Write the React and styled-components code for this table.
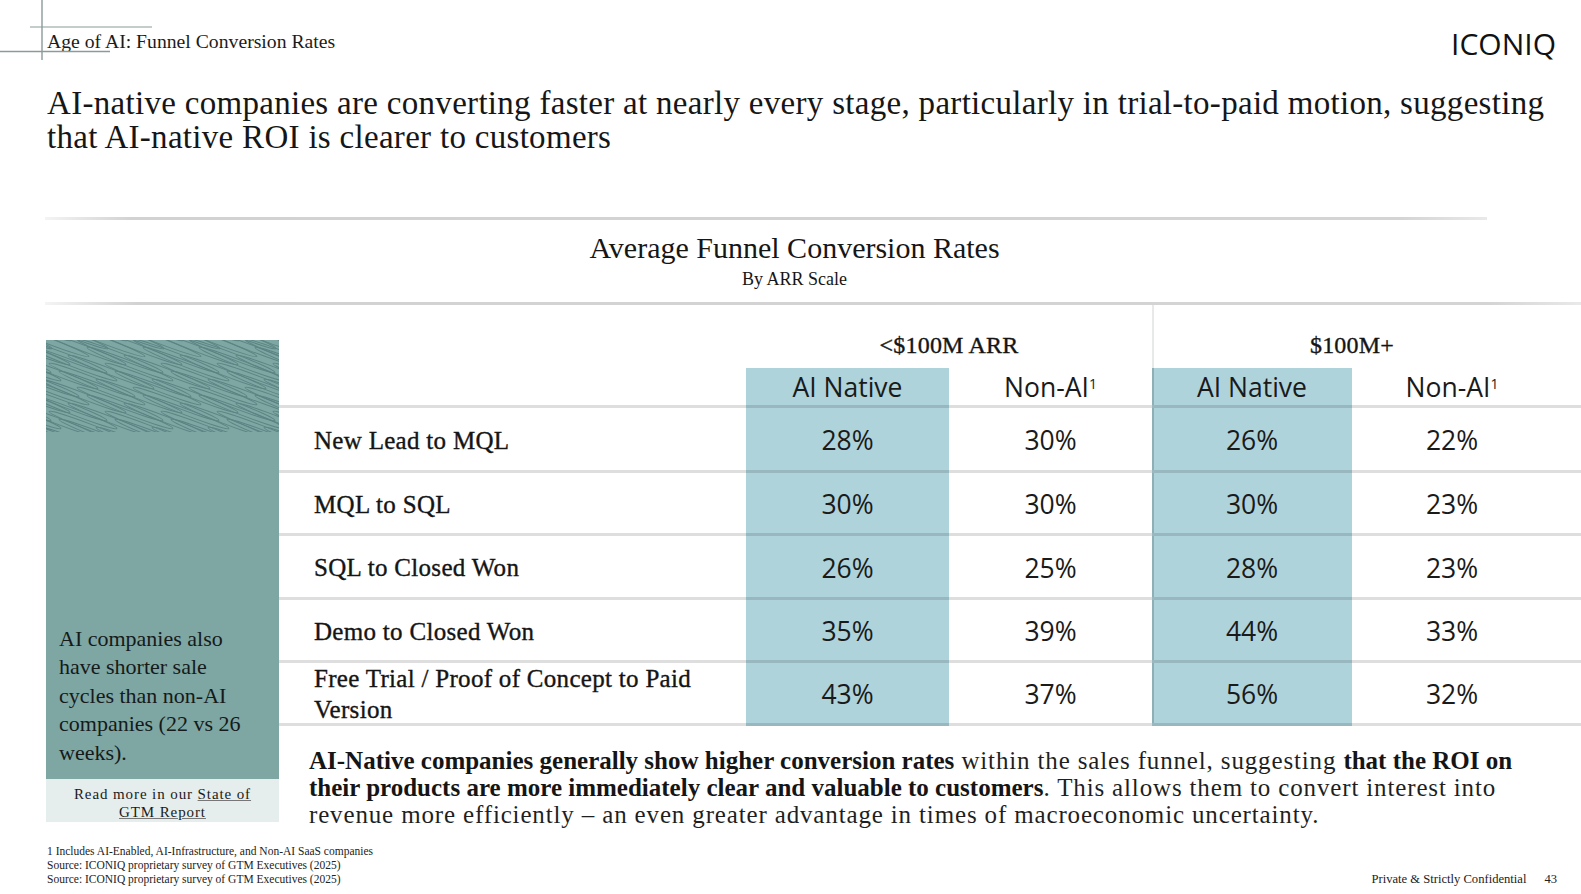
import React from 'react';
import styled, { createGlobalStyle } from 'styled-components';

const GlobalStyle = createGlobalStyle`
  html, body { margin: 0; padding: 0; background: #fff; }
  body { font-family: "Liberation Serif", "DejaVu Serif", serif; color: #151515; }
`;

const Slide = styled.div`
  position: relative;
  width: 1581px;
  height: 894px;
  overflow: hidden;
  background: #fff;
`;

const CornerMark = styled.svg`
  position: absolute;
  left: 0;
  top: 0;
`;

const TopBar = styled.header`
  display: flex;
  justify-content: space-between;
  align-items: flex-start;
  height: 58px;
  padding: 29px 25px 0 47px;
  box-sizing: border-box;
`;

const SectionLabel = styled.div`
  font-size: 19.7px;
  line-height: 24px;
  color: #1c1c1c;
`;

const Logo = styled.div`
  font-family: "Open Sans", sans-serif;
  font-size: 30px;
  line-height: 32px;
  color: #111;
  margin-top: -1px;
`;

const Headline = styled.h1`
  margin: 28px 0 0 47px;
  font-weight: 400;
  font-size: 33px;
  line-height: 34px;
  letter-spacing: 0.3px;
  white-space: nowrap;
  color: #161616;
`;

const ChartBlock = styled.section`
  margin-top: 63px;
`;

const Rule = styled.div`
  height: 3px;
  margin-left: 45px;
  width: ${p => p.$width}px;
  background: linear-gradient(90deg, rgba(200,200,200,0.2), #d2d2d2 6%, #d4d4d4 94%, rgba(200,200,200,0.4));
`;

const ChartHead = styled.div`
  text-align: center;
  padding: 11px 0 12px;
  margin-left: 8px;
`;

const ChartTitle = styled.div`
  font-size: 30px;
  line-height: 33px;
  color: #161616;
`;

const ChartSub = styled.div`
  margin-top: 4px;
  font-size: 18px;
  line-height: 22px;
  color: #161616;
`;

const Body = styled.div`
  display: flex;
  height: 530px;
  padding-left: 46px;
`;

const SidePanel = styled.aside`
  width: 233px;
  margin-top: 35px;
  display: flex;
  flex-direction: column;
`;

const SideCard = styled.div`
  height: 439px;
  background: #7ea6a3;
  display: flex;
  flex-direction: column;
  justify-content: space-between;
`;

const SideText = styled.p`
  margin: 0;
  padding: 0 15px 12px 13px;
  font-size: 22px;
  line-height: 28.4px;
  color: #151a1a;
`;

const SideLink = styled.div`
  height: 43px;
  background: #e5eeed;
  text-align: center;
  font-size: 15px;
  line-height: 18px;
  letter-spacing: 0.9px;
  color: #1a1a1a;
  padding-top: 6px;
  box-sizing: border-box;

  span {
    text-decoration: underline;
    text-decoration-color: #777;
  }
`;

const Main = styled.main`
  flex: 1;
  display: flex;
  flex-direction: column;
`;

const Table = styled.div`
  display: grid;
  grid-template-columns: 467px 203px 203px 200px 200px 1fr;
  grid-template-rows: 63px 40px 65px 63px 64px 63px 63px;
`;

const GroupHead = styled.div`
  grid-column: span 2;
  display: flex;
  align-items: flex-end;
  justify-content: center;
  padding-bottom: 10px;
  box-sizing: border-box;
  font-size: 24px;
  line-height: 26px;
  letter-spacing: 0.2px;
  -webkit-text-stroke: 0.35px #151515;
  color: #151515;
  box-shadow: ${p => (p.$divider ? 'inset 2px 0 0 rgba(150,160,160,0.22)' : 'none')};
`;

const Cell = styled.div`
  display: flex;
  align-items: center;
  justify-content: center;
  font-family: "Open Sans", sans-serif;
  font-size: 26.5px;
  color: #1a1a1a;
  background: ${p => (p.$blue ? '#afd3db' : 'transparent')};
  border-bottom: 3px solid rgba(0, 0, 0, 0.13);
  box-shadow: ${p => (p.$divider ? 'inset 2px 0 0 rgba(80,110,115,0.35)' : 'none')};
  box-sizing: border-box;
  padding-top: ${p => (p.$lift ? 0 : 2)}px;

  sup {
    font-size: 14px;
    position: relative;
    top: -3px;
  }
`;

const Label = styled.div`
  display: flex;
  align-items: center;
  padding: 2px 30px 0 35px;
  font-size: 25px;
  line-height: 31px;
  letter-spacing: 0.3px;
  color: #151515;
  -webkit-text-stroke: 0.35px #151515;
  border-bottom: 3px solid rgba(0, 0, 0, 0.13);
  box-sizing: border-box;
`;

const Summary = styled.p`
  margin: 21px 0 0 30px;
  font-size: 25px;
  line-height: 27px;
  letter-spacing: 0.85px;
  white-space: nowrap;
  color: #1f1f1f;

  strong {
    font-weight: 700;
    letter-spacing: 0;
    color: #151515;
  }
`;

const Footer = styled.footer`
  display: flex;
  justify-content: space-between;
  align-items: flex-end;
  margin-top: 9px;
  padding: 0 24px 0 47px;
`;

const Notes = styled.div`
  font-size: 11.5px;
  line-height: 14px;
  color: #222;
`;

const Confidential = styled.div`
  display: flex;
  gap: 18px;
  font-size: 12.6px;
  line-height: 14px;
  color: #222;
`;

const HatchTexture = () => {
  const strokes = [];
  for (let r = -8; r < 16; r++) {
    for (let c = -1; c < 5; c++) {
      const x = c * 56 + (r % 2) * 28 + (r % 3) * 9;
      const y = r * 8;
      strokes.push(
        <ellipse key={`${r}-${c}`} cx={x} cy={y} rx="46" ry="3" transform={`rotate(21 ${x} ${y})`} />
      );
    }
  }
  return (
    <svg width="233" height="92" viewBox="0 0 233 92">
      <g fill="none" stroke="#5b8482" strokeWidth="0.9">{strokes}</g>
    </svg>
  );
};

const rows = [
  ['New Lead to MQL', '28%', '30%', '26%', '22%'],
  ['MQL to SQL', '30%', '30%', '30%', '23%'],
  ['SQL to Closed Won', '26%', '25%', '28%', '23%'],
  ['Demo to Closed Won', '35%', '39%', '44%', '33%'],
  ['Free Trial / Proof of Concept to Paid Version', '43%', '37%', '56%', '32%'],
];

export default function App() {
  return (
    <Slide>
      <GlobalStyle />
      <CornerMark width="160" height="62" viewBox="0 0 160 62">
        <g stroke="#8c9a9a" strokeWidth="1.4" fill="none">
          <line x1="42" y1="0" x2="42" y2="60" />
          <line x1="30" y1="27" x2="152" y2="27" strokeWidth="1.1" />
          <line x1="0" y1="51.5" x2="110" y2="51.5" />
        </g>
      </CornerMark>

      <TopBar>
        <SectionLabel>Age of AI: Funnel Conversion Rates</SectionLabel>
        <Logo>ICONIQ</Logo>
      </TopBar>

      <Headline>
        AI-native companies are converting faster at nearly every stage, particularly in trial-to-paid motion, suggesting
        <br />
        that AI-native ROI is clearer to customers
      </Headline>

      <ChartBlock>
        <Rule $width={1442} />
        <ChartHead>
          <ChartTitle>Average Funnel Conversion Rates</ChartTitle>
          <ChartSub>By ARR Scale</ChartSub>
        </ChartHead>
        <Rule $width={1536} />
      </ChartBlock>

      <Body>
        <SidePanel>
          <SideCard>
            <HatchTexture />
            <SideText>AI companies also have shorter sale cycles than non-AI companies (22 vs 26 weeks).</SideText>
          </SideCard>
          <SideLink>
            Read more in our <span>State of</span>
            <br />
            <span>GTM Report</span>
          </SideLink>
        </SidePanel>

        <Main>
          <Table>
            <div />
            <GroupHead>&lt;$100M ARR</GroupHead>
            <GroupHead $divider>$100M+</GroupHead>
            <div />

            <Label />
            <Cell $blue $lift>AI Native</Cell>
            <Cell $lift>Non-AI<sup>1</sup></Cell>
            <Cell $blue $divider $lift>AI Native</Cell>
            <Cell $lift>Non-AI<sup>1</sup></Cell>
            <Cell />

            {rows.map(([label, a, b, c, d]) => (
              <React.Fragment key={label}>
                <Label>{label}</Label>
                <Cell $blue>{a}</Cell>
                <Cell>{b}</Cell>
                <Cell $blue $divider>{c}</Cell>
                <Cell>{d}</Cell>
                <Cell />
              </React.Fragment>
            ))}
          </Table>

          <Summary>
            <strong>AI-Native companies generally show higher conversion rates</strong> within the sales funnel, suggesting{' '}
            <strong>that the ROI on</strong>
            <br />
            <strong>their products are more immediately clear and valuable to customers</strong>. This allows them to convert interest into
            <br />
            revenue more efficiently – an even greater advantage in times of macroeconomic uncertainty.
          </Summary>
        </Main>
      </Body>

      <Footer>
        <Notes>
          1 Includes AI-Enabled, AI-Infrastructure, and Non-AI SaaS companies
          <br />
          Source: ICONIQ proprietary survey of GTM Executives (2025)
          <br />
          Source: ICONIQ proprietary survey of GTM Executives (2025)
        </Notes>
        <Confidential>
          <span>Private &amp; Strictly Confidential</span>
          <span>43</span>
        </Confidential>
      </Footer>
    </Slide>
  );
}
